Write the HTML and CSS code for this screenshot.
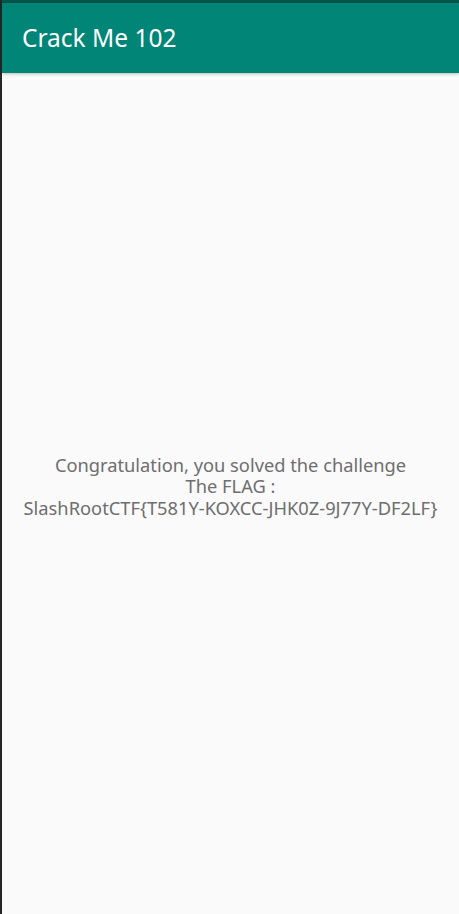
FILE: index.html
```html
<!DOCTYPE html>
<html>
<head>
<meta charset="utf-8">
<link rel="stylesheet" href="styles.css">
</head>
<body>
<div class="app">
  <div class="statusbar"></div>
  <header class="toolbar"><span class="title">Crack Me 102</span></header>
  <main class="content">
    <p class="message">Congratulation, you solved the challenge<br>The FLAG :<br>SlashRootCTF{T581Y-KOXCC-JHK0Z-9J77Y-DF2LF}</p>
  </main>
</div>
</body>
</html>
```
FILE: styles.css
```css
html, body {
  margin: 0;
  padding: 0;
  height: 100%;
}
body {
  background: #fafafa;
  font-family: "Noto Sans", "Open Sans", sans-serif;
}
.app {
  display: flex;
  flex-direction: column;
  height: 914px;
  border-left: 2px solid #262626;
  box-sizing: border-box;
}
.statusbar {
  height: 3px;
  background: #00574b;
  flex: none;
}
.toolbar {
  height: 70px;
  flex: none;
  background: #008577;
  display: flex;
  align-items: center;
  padding-left: 20px;
  box-shadow: 0 1px 3px rgba(0,0,0,0.25);
  position: relative;
  z-index: 1;
}
.title {
  color: #ffffff;
  font-size: 24.5px;
  padding-bottom: 2px;
}
.content {
  flex: 1;
  display: flex;
  align-items: center;
  justify-content: center;
  padding-bottom: 15px;
}
.message {
  margin: 0;
  text-align: center;
  color: #6e6e6e;
  font-size: 18.3px;
  line-height: 21.5px;
}
```
